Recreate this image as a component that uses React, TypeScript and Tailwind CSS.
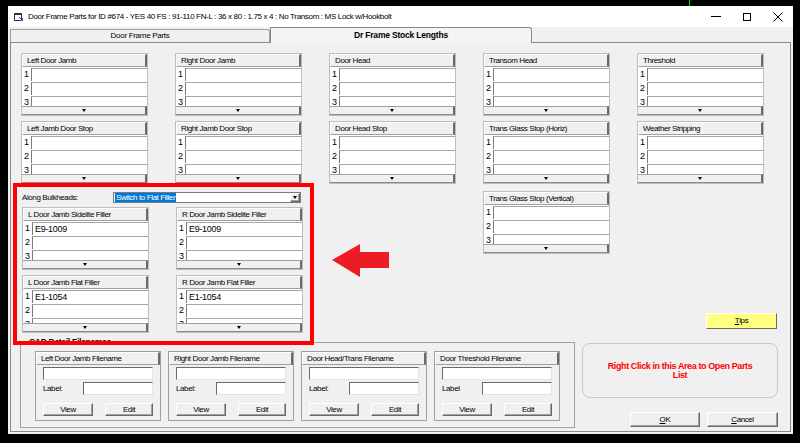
import React from 'react';

const txt = 'text-[8px] tracking-[-0.4px] leading-none whitespace-nowrap';
const raised =
  'bg-[#f0f0f0] border border-t-white border-l-white border-r-[#6a6a6a] border-b-[#6a6a6a] shadow-[inset_-1px_-1px_0_#a0a0a0]';
const sunken = 'bg-white border border-t-[#6a6a6a] border-l-[#6a6a6a] border-r-[#e3e3e3] border-b-[#e3e3e3]';

function Header({ title }: { title: string }) {
  return (
    <div
      className={`h-[13px] shrink-0 bg-[#f0f0f0] border-t border-l border-t-white border-l-white border-b border-b-[#a0a0a0] border-r-2 border-r-[#6a6a6a] flex items-center pl-[4px] overflow-hidden ${txt}`}
    >
      {title}
    </div>
  );
}

function Caret() {
  return <div className="w-0 h-0 border-x-[2.5px] border-x-transparent border-t-[3px] border-t-black" />;
}

function Panel({ title, values = [], short = false }: { title: string; values?: string[]; short?: boolean }) {
  const heights = ['h-[14px]', 'h-[14px]', short ? 'h-[6px]' : 'h-[11px]'];
  return (
    <div className="w-[127px] flex flex-col border border-[#bdbdbd] bg-white">
      <Header title={title} />
      {heights.map((h, i) => (
        <div key={i} className={`flex overflow-hidden ${h}`}>
          <div className="w-[9px] shrink-0 pl-[2px] pt-[3px] text-[9px] leading-none">{i + 1}</div>
          <div className="flex-1 mt-[1px] border-t border-l border-t-[#a6a6a6] border-l-[#7a7a7a] bg-white pl-[2px] pt-[2px] text-[9px] tracking-[-0.3px] leading-none">
            {values[i] ?? ''}
          </div>
        </div>
      ))}
      <div className="h-[9px] shrink-0 bg-[#f0f0f0] border-t border-t-[#a0a0a0] border-r-2 border-r-[#6a6a6a] border-b border-b-[#8a8a8a] flex items-center justify-center">
        <Caret />
      </div>
    </div>
  );
}

function FilePanel({ title, colon = true }: { title: string; colon?: boolean }) {
  return (
    <div className="w-[126px] h-[70px] flex flex-col border border-[#a0a0a0] bg-[#f0f0f0]">
      <Header title={title} />
      <div className="px-[7px] pt-[2px]">
        <div className={`h-[13px] ${sunken}`} />
        <div className="flex items-center mt-[2px]">
          <span className={txt}>{colon ? 'Label:' : 'Label'}</span>
          <div className={`ml-auto w-[70px] h-[13px] ${sunken}`} />
        </div>
        <div className="flex justify-between mt-[8px]">
          <div className={`w-[50px] h-[13px] flex items-center justify-center ${raised} ${txt}`}>View</div>
          <div className={`w-[48px] h-[13px] flex items-center justify-center ${raised} ${txt}`}>Edit</div>
        </div>
      </div>
    </div>
  );
}

export default function App() {
  return (
    <div className="relative w-[800px] h-[443px] bg-black overflow-hidden font-['Liberation_Sans',Arial,sans-serif] text-black">
      <div className="h-[6px] flex">
        <div className="ml-[689px] w-px h-full bg-[#1ec81e]" />
      </div>

      <div className="ml-[8px] w-[785px] h-[428px] bg-[#f0f0f0] flex flex-col">
        {/* title bar */}
        <div className="h-[21px] shrink-0 bg-white flex items-center pl-[6px]">
          <svg width="9" height="9" viewBox="0 0 9 9" className="shrink-0">
            <rect x="0.5" y="1.5" width="7" height="7" fill="none" stroke="#333" />
            <rect x="0.5" y="1.5" width="7" height="1.5" fill="#333" />
            <path d="M5 5 L8.5 8.5 M6 8.5 H8.5 V6" stroke="#1a5fb4" strokeWidth="1" fill="none" />
          </svg>
          <span className="ml-[5px] text-[8px] tracking-[-0.34px] whitespace-nowrap">
            Door Frame Parts for ID #674 - YES 40 FS : 91-110 FN-L : 36 x 80 : 1.75 x 4 : No Transom : MS Lock w/Hookbolt
          </span>
          <div className="ml-auto flex h-full">
            <div className="w-[31px] flex items-center justify-center">
              <div className="w-[10px] h-px bg-black" />
            </div>
            <div className="w-[31px] flex items-center justify-center">
              <div className="w-[8px] h-[8px] border border-black" />
            </div>
            <div className="w-[31px] flex items-center justify-center">
              <svg width="10" height="10" viewBox="0 0 10 10">
                <path d="M0.5 0.5 L9.5 9.5 M9.5 0.5 L0.5 9.5" stroke="#000" strokeWidth="1" />
              </svg>
            </div>
          </div>
        </div>

        {/* tabs */}
        <div className="h-[15px] shrink-0 flex px-[2px] items-end">
          <div className="w-[260px] h-[13px] border border-b-0 border-[#a0a0a0] rounded-tr-[3px] bg-[#f0f0f0] flex items-center justify-center text-[8px] tracking-[-0.3px]">
            Door Frame Parts
          </div>
          <div className="w-[262px] h-[16px] -mb-px relative z-10 border border-b-0 border-[#8a8a8a] rounded-tr-[3px] bg-[#f4f4f4] flex items-center justify-center text-[8.5px] font-bold tracking-[-0.2px]">
            Dr Frame Stock Lengths
          </div>
        </div>

        {/* tab page */}
        <div className="flex-1 mx-[2px] mb-[2px] border border-[#8a8a8a] bg-[#f0f0f0] flex flex-col">
          <div className="pl-[10px] pt-[10px] grid grid-cols-[repeat(5,127px)] gap-x-[27px] gap-y-[5px]">
            <Panel title="Left Door Jamb" />
            <Panel title="Right Door Jamb" />
            <Panel title="Door Head" />
            <Panel title="Transom Head" />
            <Panel title="Threshold" />
            <Panel title="Left Jamb Door Stop" />
            <Panel title="Right Jamb Door Stop" />
            <Panel title="Door Head Stop" />
            <Panel title="Trans Glass Stop (Horiz)" />
            <Panel title="Weather Stripping" />

            <div className="col-span-2 pt-[3px] pl-px">
              <div className="flex items-center h-[11px]">
                <span className={`w-[91px] ${txt}`}>Along Bulkheads:</span>
                <div className="w-[188px] h-[11px] border border-[#7a7a7a] bg-white flex items-center">
                  <span className="ml-px bg-[#0078d7] text-white px-px text-[8px] tracking-[-0.4px] leading-[9px]">
                    Switch to Flat Filler
                  </span>
                  <div className={`ml-auto w-[10px] h-full flex items-center justify-center ${raised}`}>
                    <Caret />
                  </div>
                </div>
              </div>
              <div className="grid grid-cols-[127px_127px] gap-x-[27px] gap-y-[5px] mt-[4px]">
                <Panel title="L Door Jamb Sidelite Filler" values={['E9-1009']} />
                <Panel title="R Door Jamb Sidelite Filler" values={['E9-1009']} />
                <Panel title="L Door Jamb Flat Filler" values={['E1-1054']} short />
                <Panel title="R Door Jamb Flat Filler" values={['E1-1054']} short />
              </div>
            </div>
            <div />
            <div className="pt-[2px]">
              <Panel title="Trans Glass Stop (Vertical)" />
            </div>
            <div className="flex items-end pb-[4px]">
              <div className={`ml-[69px] w-[71px] h-[16px] shrink-0 bg-[#ffff80] flex items-center justify-center border border-t-white border-l-white border-r-[#6a6a6a] border-b-[#6a6a6a] ${txt}`}>
                <span className="underline">T</span>ips
              </div>
            </div>
          </div>

          {/* bottom */}
          <div className="flex pl-[9px]">
            <div className="relative mt-[9px] w-[555px] h-[86px] border border-[#a0a0a0]">
              <span className="absolute -top-[5px] left-[7px] px-px bg-[#f0f0f0] text-[8.5px] font-bold tracking-[-0.3px] leading-none">
                CAD Detail Filenames
              </span>
              <div className="flex gap-[7px] pl-[14px] pt-[8px]">
                <FilePanel title="Left Door Jamb Filename" />
                <FilePanel title="Right Door Jamb Filename" />
                <FilePanel title="Door Head/Trans Filename" />
                <FilePanel title="Door Threshold Filename" colon={false} />
              </div>
            </div>
            <div className="ml-[7px] mt-[10px] w-[196px] flex flex-col">
              <div className="h-[55px] rounded-[8px] border border-[#c8c8c8] flex items-center justify-center text-center text-[#ff0000] font-bold text-[9px] tracking-[-0.4px] leading-[9px]">
                Right Click in this Area to Open Parts
                <br />
                List
              </div>
              <div className="flex justify-end gap-[7px] mt-[14px]">
                <div className={`w-[70px] h-[15px] flex items-center justify-center ${raised} ${txt}`}>
                  <span className="underline">O</span>K
                </div>
                <div className={`w-[71px] h-[15px] flex items-center justify-center ${raised} ${txt}`}>
                  <span className="underline">C</span>ancel
                </div>
              </div>
            </div>
          </div>
        </div>
      </div>

      {/* annotation overlays */}
      <div className="absolute left-[13px] top-[183px] w-[301px] h-[162px] border-4 border-[#ff0000]" />
      <svg className="absolute left-[330px] top-[242px]" width="62" height="38" viewBox="0 0 62 38">
        <polygon points="2,18 30,2 30,10 59,10 59,26 30,26 30,35" fill="#ed1c24" />
      </svg>
    </div>
  );
}
